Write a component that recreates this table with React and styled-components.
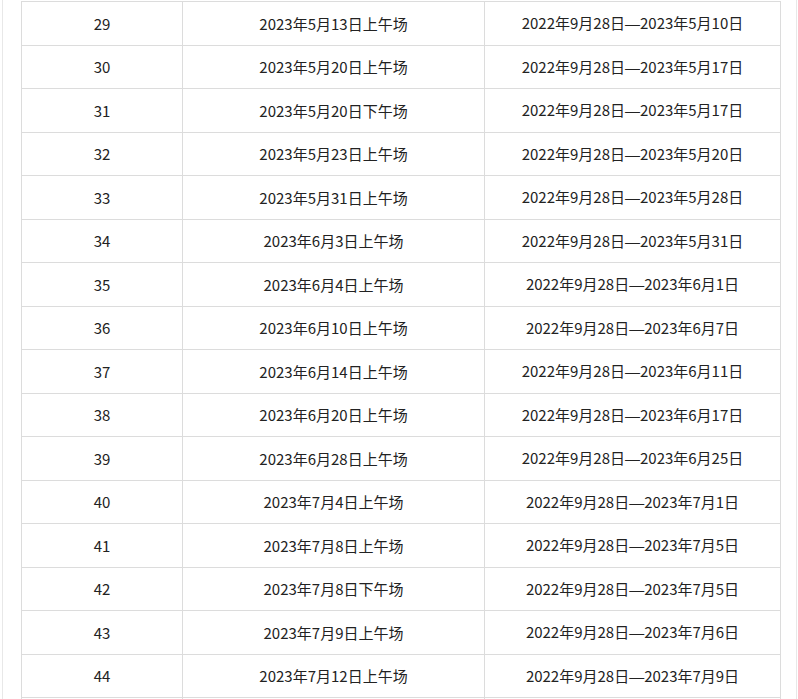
import React from "react";
import styled, { createGlobalStyle } from "styled-components";

const Global = createGlobalStyle`
  html, body { margin: 0; padding: 0; background: #fff; }
  body { font-family: "Noto Sans CJK SC", "Noto Sans", sans-serif; }
`;

const Frame = styled.div`
  box-sizing: border-box;
  margin-left: 2px;
  width: 795px;
  height: 699px;
  overflow: hidden;
  border-left: 1px solid #e8e8e8;
  border-right: 1px solid #e8e8e8;
  padding: 1px 15px 0 18px;
`;

const Table = styled.table`
  border-collapse: collapse;
  table-layout: fixed;
  width: 759px;
  color: #222;
  font-size: 15px;
`;

const Col = styled.col`
  width: ${(p) => p.$w}px;
`;

const Cell = styled.td`
  border: 1px solid #dcdcdc;
  text-align: center;
  vertical-align: middle;
  padding: 0;
  height: ${(p) => (p.$tall ? 43 : 42)}px;
  line-height: 20px;
  white-space: nowrap;
`;

const Dash = styled.span`
  font-family: "Liberation Sans", Arial, sans-serif;
  font-size: 15px;
`;

const rows = [
  [29, "5月13日上午场", "5月10日"],
  [30, "5月20日上午场", "5月17日"],
  [31, "5月20日下午场", "5月17日"],
  [32, "5月23日上午场", "5月20日"],
  [33, "5月31日上午场", "5月28日"],
  [34, "6月3日上午场", "5月31日"],
  [35, "6月4日上午场", "6月1日"],
  [36, "6月10日上午场", "6月7日"],
  [37, "6月14日上午场", "6月11日"],
  [38, "6月20日上午场", "6月17日"],
  [39, "6月28日上午场", "6月25日"],
  [40, "7月4日上午场", "7月1日"],
  [41, "7月8日上午场", "7月5日"],
  [42, "7月8日下午场", "7月5日"],
  [43, "7月9日上午场", "7月6日"],
  [44, "7月12日上午场", "7月9日"],
];

export default function App() {
  return (
    <>
      <Global />
      <Frame>
        <Table>
          <colgroup>
            <Col $w={161} />
            <Col $w={302} />
            <Col $w={296} />
          </colgroup>
          <tbody>
            {rows.map(([n, exam, end], i) => (
              <tr key={n}>
                <Cell $tall={i % 2 === 0}>{n}</Cell>
                <Cell $tall={i % 2 === 0}>2023年{exam}</Cell>
                <Cell $tall={i % 2 === 0}>
                  2022年9月28日<Dash>—</Dash>2023年{end}
                </Cell>
              </tr>
            ))}
            <tr>
              <Cell $tall />
              <Cell $tall />
              <Cell $tall />
            </tr>
          </tbody>
        </Table>
      </Frame>
    </>
  );
}
